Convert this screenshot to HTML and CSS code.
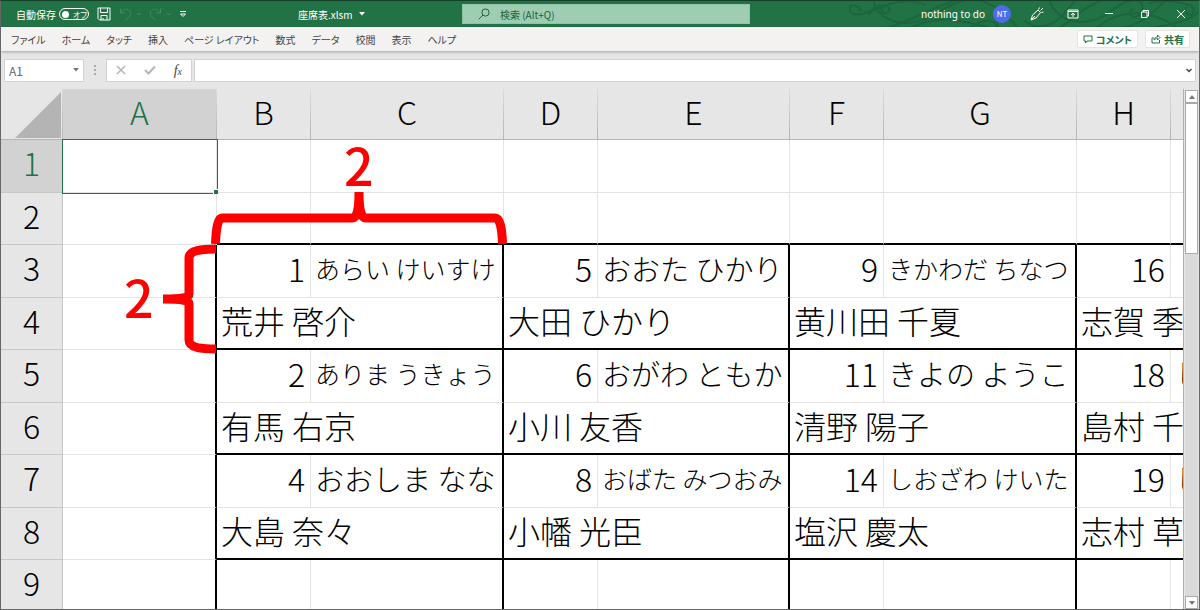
FILE: index.html
```html
<!DOCTYPE html>
<html lang="ja">
  <head>
    <meta charset="UTF-8" />
    <meta name="viewport" content="width=device-width, initial-scale=1.0" />
    <title>座席表.xlsm</title>
    <link rel="stylesheet" href="styles.css" />
  </head>
  <body>
    <div class="app">
      <header class="titlebar">
        <svg class="swirls" viewBox="0 0 350 26" aria-hidden="true">
          <path d="M12 10C8 2 -2 3 1 10C5 17 18 12 32 6S64 -2 76 4M20 14C24 2 44 2 40 10C36 16 28 8 36 5M24 -2C28 22 60 30 88 12S130 -4 150 8M34 28C60 22 86 4 112 -2M60 28C92 10 118 22 146 28M120 28C136 14 152 22 146 26M150 28C142 14 166 14 168 28M176 20C190 32 206 22 214 14S226 -4 232 -2M200 -2C206 20 236 30 262 10S300 2 290 14C284 20 276 12 284 8M208 28C226 20 236 0 262 -2M246 28C270 8 300 6 330 28M262 28C290 28 306 10 318 -2M300 2C320 -2 346 2 345 10C343 18 332 12 338 6M300 28C322 22 340 22 350 10" />
        </svg>
        <div class="quick">
          <label class="autosave"><span>自動保存</span>
            <span class="switch"><input type="checkbox" /><i></i><span>オフ</span></span>
          </label>
          <button class="tool" aria-label="上書き保存">
            <svg width="14" height="14" viewBox="0 0 14 14"><path d="M1 1h12v12H2.500L1 11.500zM3.500 1v4.500h7V1M4 13V8.500h6V13M6 13v-2" /></svg>
          </button>
          <button class="tool dim" aria-label="元に戻す">
            <svg width="22" height="14" viewBox="0 0 22 14"><path d="M1.500 1.500v4.500h4.500M1.500 6C4 2.500 7 1.500 9.500 3C12.500 5 12 8 10 10L6.500 13M18 6l2 2 2-2" /></svg>
          </button>
          <button class="tool dim" aria-label="やり直し">
            <svg width="22" height="14" viewBox="0 0 22 14"><path d="M11.500 1.500v4.500H7M11.500 6C9 2.500 6 1.500 3.500 3C.5 5 1 8 3 10l3.500 3M18 6l2 2 2-2" /></svg>
          </button>
          <button class="tool" aria-label="カスタマイズ">
            <svg width="8" height="8" viewBox="0 0 8 8"><path d="M1 1.500h6M1.500 4h5L4 6.500z" /></svg>
          </button>
        </div>
        <button class="filename">座席表.xlsm
          <svg width="6" height="4" viewBox="0 0 6 4"><path d="M0 0h6L3 3.500z" /></svg>
        </button>
        <div class="search">
          <svg width="12" height="12" viewBox="0 0 12 12"><circle cx="7.500" cy="4.500" r="3.600" /><path d="M5 7L.8 11.200" /></svg>
          <input type="text" aria-label="検索" placeholder="検索 (Alt+Q)" />
        </div>
        <div class="account">
          <span class="user">nothing to do</span>
          <span class="avatar">NT</span>
          <button class="tool" aria-label="ペン">
            <svg width="14" height="14" viewBox="0 0 14 14"><path d="M1 13l1.500-5L8 3l2.500 2.500L6 11zM1 13l4-4M8.500 2.500l1-2M10.500 3.500L13 1M11.500 5.500l2-.5" /></svg>
          </button>
          <button class="tool" aria-label="リボンの表示オプション">
            <svg width="12" height="10" viewBox="0 0 12 10"><path d="M1 1h10v8H1zM1 2.500h10M6 8V4.500M4 6l2-1.800L8 6" /></svg>
          </button>
          <button class="tool" aria-label="最小化">
            <svg width="10" height="10" viewBox="0 0 10 10"><path d="M1 4.500h8" /></svg>
          </button>
          <button class="tool" aria-label="元に戻す (縮小)">
            <svg width="10" height="10" viewBox="0 0 10 10"><path d="M1.500 3h5.500v5.500H1.500zM3 3V1.500h5.500V7H7" /></svg>
          </button>
          <button class="tool" aria-label="閉じる">
            <svg width="10" height="10" viewBox="0 0 10 10"><path d="M1 1l8 8M9 1L1 9" /></svg>
          </button>
        </div>
      </header>

      <nav class="ribbon">
        <div class="tabs">
          <button>ファイル</button>
          <button>ホーム</button>
          <button>タッチ</button>
          <button>挿入</button>
          <button>ページ レイアウト</button>
          <button>数式</button>
          <button>データ</button>
          <button>校閲</button>
          <button>表示</button>
          <button>ヘルプ</button>
        </div>
        <button class="action">
          <svg width="10" height="9" viewBox="0 0 10 9"><path d="M1 1h8v5H4L2.500 8V6H1z" /></svg>
          コメント
        </button>
        <button class="action">
          <svg width="10" height="10" viewBox="0 0 10 10"><path d="M3 4H1v5h7.500V6M3 6C3.500 4 5 3 6.500 3V1L9 3.500 6.500 6V4.500C5 4.500 4 5 3 6z" /></svg>
          共有
        </button>
      </nav>

      <div class="formula-bar">
        <div class="name-box">
          <input type="text" aria-label="名前ボックス" value="A1" />
          <svg width="6" height="4" viewBox="0 0 6 4"><path d="M0 0h6L3 3.500z" /></svg>
        </div>
        <svg class="grip" width="2" height="10" viewBox="0 0 2 10"><path d="M0 0h2v2H0zM0 4h2v2H0zM0 8h2v2H0z" /></svg>
        <div class="fx">
          <button aria-label="キャンセル"><svg width="10" height="10" viewBox="0 0 10 10"><path d="M1 1l8 8M9 1L1 9" stroke-width="1.500" /></svg></button>
          <button aria-label="入力"><svg width="12" height="10" viewBox="0 0 12 10"><path d="M1 5l3.500 3.500L11 1.500" stroke-width="2" /></svg></button>
          <button aria-label="関数の挿入"><em>f<small>x</small></em></button>
        </div>
        <div class="formula">
          <input type="text" aria-label="数式" />
          <svg width="6" height="5" viewBox="0 0 6 5"><path d="M.5 1L3 3.500 5.500 1" stroke-width="1.500" /></svg>
        </div>
      </div>

      <main class="sheet">
        <div class="viewport">
          <table>
            <colgroup>
              <col class="col-head" /><col class="col-a" />
              <col class="col-no" /><col class="col-kana" />
              <col class="col-no" /><col class="col-kana even" />
              <col class="col-no" /><col class="col-kana" />
              <col class="col-no" /><col class="col-kana even" />
            </colgroup>
            <thead>
              <tr>
                <th class="corner"><svg width="46" height="46" viewBox="0 0 46 46"><path d="M46 0v46H0z" /></svg></th>
                <th class="on">A</th><th>B</th><th>C</th><th>D</th><th>E</th><th>F</th><th>G</th><th>H</th><th></th>
              </tr>
            </thead>
            <tbody>
              <tr>
                <th class="on">1</th><td class="selected"></td><td></td><td></td><td></td><td></td><td></td><td></td><td></td><td></td>
              </tr>
              <tr class="end">
                <th>2</th><td></td><td></td><td></td><td></td><td></td><td></td><td></td><td></td><td></td>
              </tr>
              <tr class="seat">
                <th>3</th><td></td>
                <td class="no">1</td><td class="kana small">あらい けいすけ</td>
                <td class="no">5</td><td class="kana">おおた ひかり</td>
                <td class="no">9</td><td class="kana small">きかわだ ちなつ</td>
                <td class="no">16</td><td class="kana"></td>
              </tr>
              <tr class="end">
                <th>4</th><td></td>
                <td class="name" colspan="2">荒井 啓介</td>
                <td class="name" colspan="2">大田 ひかり</td>
                <td class="name" colspan="2">黄川田 千夏</td>
                <td class="name" colspan="2">志賀 季</td>
              </tr>
              <tr class="seat">
                <th>5</th><td></td>
                <td class="no">2</td><td class="kana small">ありま うきょう</td>
                <td class="no">6</td><td class="kana">おがわ ともか</td>
                <td class="no">11</td><td class="kana">きよの ようこ</td>
                <td class="no">18</td><td class="kana">し</td>
              </tr>
              <tr class="end">
                <th>6</th><td></td>
                <td class="name" colspan="2">有馬 右京</td>
                <td class="name" colspan="2">小川 友香</td>
                <td class="name" colspan="2">清野 陽子</td>
                <td class="name" colspan="2">島村 千</td>
              </tr>
              <tr class="seat">
                <th>7</th><td></td>
                <td class="no">4</td><td class="kana">おおしま なな</td>
                <td class="no">8</td><td class="kana small">おばた みつおみ</td>
                <td class="no">14</td><td class="kana small">しおざわ けいた</td>
                <td class="no">19</td><td class="kana">し</td>
              </tr>
              <tr class="end">
                <th>8</th><td></td>
                <td class="name" colspan="2">大島 奈々</td>
                <td class="name" colspan="2">小幡 光臣</td>
                <td class="name" colspan="2">塩沢 慶太</td>
                <td class="name" colspan="2">志村 草</td>
              </tr>
              <tr class="seat">
                <th>9</th><td></td>
                <td class="no"></td><td class="kana"></td>
                <td class="no"></td><td class="kana"></td>
                <td class="no"></td><td class="kana"></td>
                <td class="no"></td><td class="kana"></td>
              </tr>
            </tbody>
          </table>

          <!-- hand-placed annotation: each seat is 2 columns x 2 rows -->
          <svg class="braces" width="510" height="270" viewBox="0 0 510 270">
            <path d="M214.500 155C215 139 217 129 221 129H351C356 129 358 121 358 103C358 121 360 129 365 129H494C499 129 501 139 501.500 155" />
            <path d="M215 160C201 160 188 161 188 169V205C188 209 180 210 162 210C180 210 188 211 188 215V251C188 259 201 260 215 260" />
          </svg>
          <span class="count count-cols">2</span>
          <span class="count count-rows">2</span>
        </div>
        <div class="scrollbar">
          <button aria-label="上へ"><svg width="6" height="4" viewBox="0 0 6 4"><path d="M0 4h6L3 0z" /></svg></button>
          <div class="thumb"></div>
          <button class="down" aria-label="下へ"><svg width="6" height="4" viewBox="0 0 6 4"><path d="M0 0h6L3 4z" /></svg></button>
        </div>
      </main>
    </div>
  </body>
</html>
```
FILE: styles.css
```css
* {
  box-sizing: border-box;
}

body {
  margin: 0;
  font-family: "Noto Sans CJK JP", "Noto Sans", sans-serif;
  font-size: 12px;
  color: #444;
}

button,
input {
  font: inherit;
  color: inherit;
  background: none;
  border: none;
  padding: 0;
  margin: 0;
  outline: none;
}

svg {
  display: block;
  fill: none;
  stroke: currentColor;
}

.app {
  display: flex;
  flex-direction: column;
  height: 100vh;
  border: 1px solid #666;
  border-top-color: #14402a;
  background: #e6e6e6;
  overflow: hidden;
}

/* title bar */
.titlebar {
  position: relative;
  display: flex;
  align-items: center;
  height: 26px;
  flex: none;
  background: #217346;
  color: #fff;
}

.swirls {
  position: absolute;
  right: 0;
  top: 0;
  width: 350px;
  height: 26px;
  color: #1c653d;
  stroke-width: 2px;
}

.quick {
  display: flex;
  align-items: center;
  gap: 8px;
  padding-left: 15px;
  width: 265px;
}

.autosave {
  display: flex;
  align-items: center;
  gap: 3px;
  font-size: 10px;
  white-space: nowrap;
  font-feature-settings: "palt";
}

.switch {
  display: flex;
  align-items: center;
  gap: 4px;
  width: 30px;
  height: 12px;
  padding-left: 2px;
  border: 1px solid #fff;
  border-radius: 6px;
  font-size: 8px;
}

.switch input {
  position: absolute;
  opacity: 0;
}

.switch i {
  width: 7px;
  height: 7px;
  border-radius: 50%;
  background: #fff;
}

.dim {
  color: #448a65;
}

.filename {
  display: flex;
  align-items: center;
  gap: 6px;
  width: 196px;
  padding-left: 32px;
  font-size: 10px;
}

.filename svg,
.name-box svg,
.grip,
.scrollbar svg {
  fill: currentColor;
  stroke: none;
}

.name-box svg {
  color: #777;
}

.search {
  display: flex;
  align-items: center;
  gap: 10px;
  width: 24%;
  height: 20px;
  padding-left: 15px;
  background: #9fcdb3;
  border: 1px solid #8fc3a5;
  color: #1b6139;
}

.search input {
  flex: 1;
  font-size: 10px;
}

.search input::placeholder {
  color: #1b6139;
  opacity: 1;
}

.account {
  position: relative;
  display: flex;
  align-items: center;
  margin-left: auto;
  padding-right: 13px;
}

.account .tool {
  display: flex;
  justify-content: center;
  width: 36px;
}

.account .tool:last-child {
  width: 10px;
  margin-left: 13px;
}

.user {
  font-family: "Noto Sans", sans-serif;
  font-size: 10px;
}

.avatar {
  width: 18px;
  height: 18px;
  margin: 0 8px;
  border-radius: 50%;
  background: #4f6bed;
  font-size: 8px;
  line-height: 18px;
  text-align: center;
}

/* ribbon */
.ribbon {
  position: relative;
  display: flex;
  align-items: center;
  gap: 7px;
  height: 24px;
  flex: none;
  padding-right: 9px;
  background: #f3f2f1;
  box-shadow: 0 1px 3px rgba(0, 0, 0, 0.3);
}

.tabs {
  display: flex;
  gap: 16px;
  margin-right: auto;
  padding-left: 10px;
  font-size: 10px;
  font-feature-settings: "palt";
}

.tabs button {
  white-space: nowrap;
}

.action {
  display: flex;
  align-items: center;
  gap: 3px;
  height: 18px;
  padding: 0 5px;
  background: #fff;
  border: 1px solid #e6e4e2;
  border-radius: 2px;
  color: #217346;
  font-size: 10px;
  font-weight: 700;
  font-feature-settings: "palt";
}

/* formula bar */
.formula-bar {
  display: flex;
  align-items: center;
  flex: none;
  height: 38px;
  padding: 0 3px;
}

.name-box,
.fx,
.formula {
  display: flex;
  align-items: center;
  height: 23px;
  background: #fff;
  border: 1px solid #d2d2d2;
}

.name-box {
  width: 80px;
  padding: 0 4px;
  color: #666;
}

.name-box input {
  flex: 1;
  min-width: 0;
}

.grip {
  margin: 0 10px;
  color: #aaa;
}

.fx {
  justify-content: space-around;
  width: 86px;
  margin-right: 2px;
  color: #b5b5b5;
}

.fx em {
  color: #444;
  font-family: "Liberation Serif", serif;
  font-size: 14px;
  line-height: 14px;
}

.fx small {
  font-size: 10px;
}

.formula {
  flex: 1;
  padding-right: 3px;
}

.formula input {
  flex: 1;
}

/* sheet */
.sheet {
  display: flex;
  flex: 1;
  min-height: 0;
}

.viewport {
  position: relative;
  flex: 1;
  min-width: 0;
  overflow: hidden;
  border-right: 1px solid #b0b0b0;
}

table {
  table-layout: fixed;
  width: 1362px;
  border-collapse: separate;
  border-spacing: 0;
  color: #000;
  font-size: 32px;
  line-height: 40px;
  font-weight: 300;
}

.col-head {
  width: 62px;
}

.col-a {
  width: 154px;
}

.col-no {
  width: 94px;
}

.col-kana {
  width: 193px;
}

.col-kana.even {
  width: 192px;
}

th,
td {
  height: 53px;
  padding: 0 0 6px;
  border-right: 1px solid #e3e3e3;
  border-bottom: 1px solid #e3e3e3;
  white-space: nowrap;
}

td {
  background: #fff;
}

th {
  font-weight: 300;
  background: #e6e6e6;
  border-color: #c6c6c6;
}

tbody th {
  padding-bottom: 8px;
}

thead th {
  height: 51px;
  border-bottom-color: #b4b4b4;
  border-right: 1px solid;
  border-image: linear-gradient(#dcdcdc, #b4b4b4) 1;
}

th.on {
  background: #d2d2d2;
  color: #217346;
}

.corner {
  padding: 0;
}

.corner svg {
  margin: 2px 1px 0 auto;
  fill: #b4b4b4;
  stroke: none;
}

.end th,
.end td {
  height: 52px;
}

/* black frame round each seat */
.end td:nth-child(n + 3) {
  border-bottom: 2px solid #000;
}

.seat td:nth-child(even),
.end .name,
.seat + .end td:nth-child(2) {
  border-right: 2px solid #000;
}

.no {
  padding-right: 5px;
  text-align: right;
}

.kana {
  padding-left: 4px;
  font-size: 29px;
}

.kana.small {
  font-size: 25px;
}

.name {
  padding-left: 4px;
}

.selected {
  position: relative;
  outline: 1px solid #217346;
}

.selected::after {
  content: "";
  position: absolute;
  right: -2px;
  bottom: -2px;
  width: 4px;
  height: 4px;
  background: #217346;
  border: 1px solid #fff;
  border-width: 1px 0 0 1px;
}

.braces {
  position: absolute;
  left: 0;
  top: 0;
  color: #f00;
  stroke-width: 9px;
}

.count {
  position: absolute;
  color: #f00;
  font-size: 52px;
  font-weight: 500;
  line-height: 52px;
}

.count-cols {
  left: 343px;
  top: 49px;
}

.count-rows {
  left: 123px;
  top: 181px;
}

.scrollbar {
  display: flex;
  flex-direction: column;
  width: 13px;
  margin: 1px 1px 0 1px;
  background: #dadada;
}

.scrollbar button {
  display: flex;
  align-items: center;
  justify-content: center;
  height: 13px;
  background: #fff;
  border: 1px solid #aaa;
  color: #777;
}

.scrollbar .down {
  margin-top: auto;
}

.thumb {
  height: 29%;
  background: #fff;
  border: 1px solid #aaa;
}
```
